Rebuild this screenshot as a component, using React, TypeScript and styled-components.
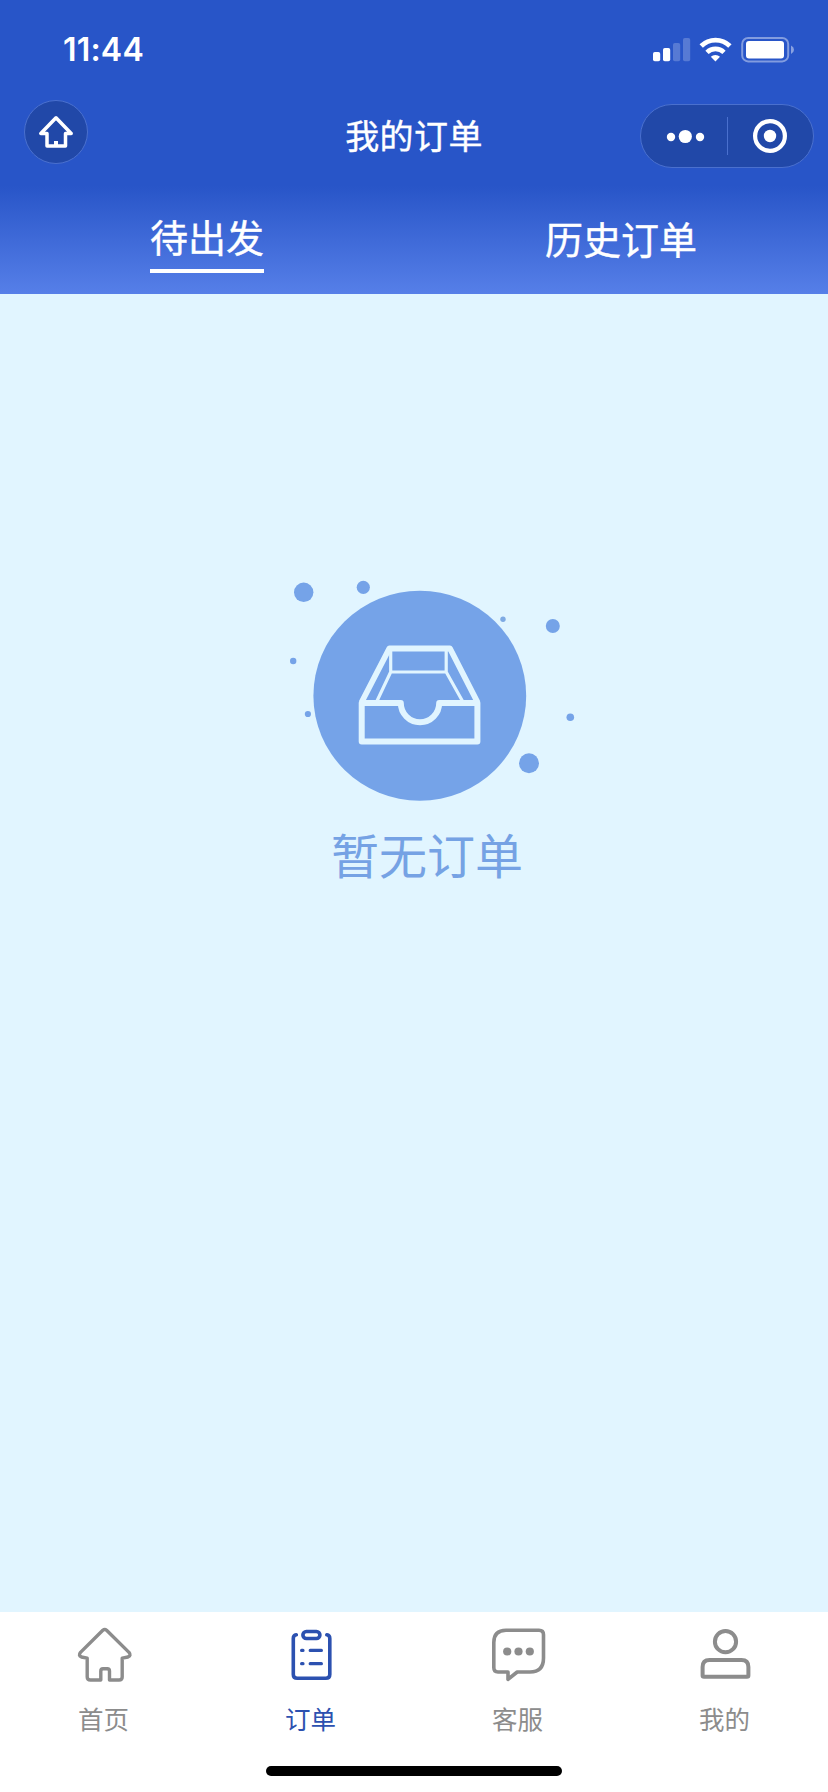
import React from 'react';
import styled, { createGlobalStyle } from 'styled-components';

const GlobalStyle = createGlobalStyle`
  * { box-sizing: border-box; }
  body {
    margin: 0;
    font-family: "Noto Sans CJK SC", "Noto Sans", sans-serif;
    -webkit-font-smoothing: antialiased;
  }
`;

const Screen = styled.div`
  display: flex;
  flex-direction: column;
  width: 828px;
  height: 1792px;
  background: #e1f5ff;
  overflow: hidden;
`;

const Header = styled.header`
  flex: none;
  height: 294px;
  display: flex;
  flex-direction: column;
  color: #fff;
  background: linear-gradient(to bottom, #2855c8 0, #2855c8 186px, #567fe8 294px);
`;

const StatusBar = styled.div`
  height: 100px;
  display: flex;
  justify-content: space-between;
  align-items: flex-start;
  padding: 37px 34px 0 63px;
`;

const Time = styled.span`
  font: 600 32px/26px Inter, sans-serif;
  letter-spacing: 0.2px;
`;

const NavBar = styled.div`
  height: 72px;
  display: grid;
  grid-template-columns: 174px 1fr 174px;
  align-items: start;
  padding: 0 14px;
`;

const HomeButton = styled.button`
  width: 64px;
  height: 64px;
  margin-left: 10px;
  padding: 0;
  border: 1px solid #4a70ce;
  border-radius: 50%;
  background: #2148a8;
  display: grid;
  place-items: center;
`;

const Title = styled.h1`
  margin: 10px 0 0;
  text-align: center;
  font-size: 34px;
  line-height: 50px;
  font-weight: 400;
  letter-spacing: 0.4px;
  -webkit-text-stroke: 0.4px currentColor;
`;

const Capsule = styled.div`
  width: 174px;
  height: 64px;
  margin-top: 4px;
  border: 1px solid #4a70ce;
  border-radius: 32px;
  background: #2148a8;
  display: grid;
  place-items: center;
`;

const Tabs = styled.nav`
  flex: 1;
  display: grid;
  grid-template-columns: 1fr 1fr;
  justify-items: center;
  align-items: start;
`;

const Tab = styled.div<{ $active?: boolean }>`
  margin-top: ${(p) => (p.$active ? 36 : 38)}px;
  height: 65px;
  font-size: 38px;
  line-height: 56px;
  font-weight: 400;
  -webkit-text-stroke: 0.4px currentColor;
  border-bottom: 4px solid ${(p) => (p.$active ? '#fff' : 'transparent')};
`;

const Content = styled.main`
  flex: 1;
  display: flex;
  flex-direction: column;
  align-items: center;
  padding-top: 276px;
`;

const EmptyText = styled.p`
  margin: 8px 0 0 26px;
  font-size: 48px;
  line-height: 70px;
  font-weight: 400;
  color: #75a2e4;
`;

const TabBar = styled.footer`
  flex: none;
  height: 180px;
  background: #fff;
  display: flex;
  flex-direction: column;
  align-items: center;
`;

const TabBarItems = styled.div`
  width: 100%;
  height: 154px;
  display: grid;
  grid-template-columns: repeat(4, 1fr);
`;

const TabBarItem = styled.div<{ $active?: boolean }>`
  display: flex;
  flex-direction: column;
  align-items: center;
  padding-top: 12px;
  color: ${(p) => (p.$active ? '#2c51b0' : '#8c8c8c')};
`;

const TabBarLabel = styled.span`
  margin-top: 15px;
  font-size: 25.5px;
  line-height: 38px;
`;

const HomeIndicator = styled.div`
  width: 296px;
  height: 10px;
  border-radius: 5px;
  background: #000;
`;

const StatusIcons = () => (
  <svg width="141" height="26" viewBox="0 0 141 26" fill="#fff">
    <rect x="0" y="15" width="7.2" height="9.2" rx="1.8" />
    <rect x="10" y="11" width="7.2" height="13.2" rx="1.8" />
    <rect x="20" y="6" width="7.2" height="18.2" rx="1.8" opacity=".22" />
    <rect x="30" y="1" width="7.2" height="23.2" rx="1.8" opacity=".22" />
    <g fill="none" stroke="#fff">
      <path d="M48.2 9 A20.4 20.4 0 0 1 76.9 9" strokeWidth="4.8" />
      <path d="M54 15.4 A12 12 0 0 1 71 15.4" strokeWidth="4.6" />
    </g>
    <path d="M57.8 19.8 A6.8 6.8 0 0 1 67 19.8 L62.4 24.4Z" />
    <rect x="89.2" y="1" width="46" height="23.4" rx="6" fill="none" stroke="#fff" strokeOpacity=".42" strokeWidth="2" />
    <rect x="93" y="4" width="38" height="17.4" rx="3" />
    <path d="M138 8.5 Q141 10 141 12.8 Q141 15.6 138 17Z" opacity=".45" />
  </svg>
);

const NavHomeIcon = () => (
  <svg width="62" height="62" viewBox="1 1 62 62" fill="none" stroke="#fff" strokeWidth="3.5" strokeLinejoin="round" strokeLinecap="round">
    <path d="M32 17.8 L16.8 33.5 H23 V46 H41.5 V33.5 H47.2Z" />
    <path d="M32 41 V46" strokeLinecap="butt" strokeWidth="4" />
  </svg>
);

const CapsuleIcons = () => (
  <svg width="172" height="62" viewBox="1 1 172 62" fill="#fff">
    <circle cx="31" cy="33" r="4.2" />
    <circle cx="45.3" cy="32.5" r="6.6" />
    <circle cx="60" cy="33" r="4.2" />
    <path d="M87.5 13 V51" stroke="#4a70ce" strokeWidth="1" />
    <circle cx="130" cy="32" r="14.9" fill="none" stroke="#fff" strokeWidth="4.2" />
    <circle cx="130" cy="32" r="6.2" />
  </svg>
);

const EmptyIllustration = () => (
  <svg width="300" height="240" viewBox="264 570 300 240" fill="#75a3e8">
    <ellipse cx="419.8" cy="695.7" rx="106.4" ry="105" />
    <circle cx="303.7" cy="592.3" r="9.7" />
    <circle cx="363.3" cy="587.3" r="6.6" />
    <circle cx="503" cy="619.2" fill="#7eaae3" r="2.7" />
    <circle cx="552.8" cy="626" r="7" />
    <circle cx="293.2" cy="661" r="3.2" />
    <circle cx="307.9" cy="714" r="3.1" />
    <circle cx="570.3" cy="717.2" r="3.8" />
    <circle cx="529" cy="763.3" r="10" />
    <g fill="none" stroke="#e1f5ff" strokeLinejoin="round">
      <path d="M361.7 703 H400.8 A19.2 19.2 0 0 0 439.2 703 H477.4 V741.5 H361.7Z" strokeWidth="6" />
      <path d="M361.7 702 L389.3 648.5 H450 L477.4 702" strokeWidth="5.8" />
      <path d="M390.7 649 V672 L376.5 702 M446.2 649 V672 L463 702 M390.7 672 H447" strokeWidth="3.2" />
    </g>
  </svg>
);

const EmptyArt = styled.div`
  width: 300px;
  height: 240px;
  svg { display: block; overflow: visible; }
`;

const iconProps = {
  width: 60,
  height: 60,
  viewBox: '0 0 60 60',
  fill: 'none',
  stroke: 'currentColor',
  strokeLinecap: 'round',
  strokeLinejoin: 'round',
} as const;

const HomeIcon = () => (
  <svg {...iconProps} strokeWidth="3.4">
    <path d="M28.8 6.2 Q30.7 4.6 32.6 6.2 L55 28.4 Q57.5 31.5 54 33 L48.2 34.2 V53 Q48.2 56 45 56 H35.5 V47 Q35.5 44.8 33.3 44.8 H29 Q26.8 44.8 26.8 47 V56 H16.5 Q13.2 56 13.2 53 V34.2 L7.4 33 Q4 31.5 6.5 28.4Z" />
  </svg>
);

const OrdersIcon = () => (
  <svg {...iconProps} strokeWidth="3.6">
    <path d="M15.3 10.8 Q12.3 11.3 12.3 14.5 V50.5 Q12.3 54.3 16.3 54.3 H44.8 Q48.8 54.3 48.8 50.5 V14.5 Q48.8 11.3 45.8 10.8" />
    <rect x="21.9" y="7.5" width="17" height="7" rx="3.5" />
    <path d="M20.6 26.4 H22 M29.2 26.4 H40.4 M20.6 39.7 H22 M29.2 39.7 H40.4" strokeWidth="3.2" />
  </svg>
);

const ServiceIcon = () => (
  <svg {...iconProps} strokeWidth="3.6">
    <path d="M18 6.2 H51 Q55.5 6.2 55.5 10.8 V34 Q55.5 48 42 48 H29.2 L20 55.4 V48 H10 Q5.8 48 5.8 43.6 V18.5 Q5.8 6.2 18 6.2Z" />
    <g fill="currentColor" stroke="none">
      <circle cx="19.2" cy="27.5" r="4.1" />
      <circle cx="30.5" cy="27.5" r="4.1" />
      <circle cx="41.8" cy="27.5" r="4.1" />
    </g>
  </svg>
);

const ProfileIcon = () => (
  <svg {...iconProps} strokeWidth="4">
    <circle cx="30.5" cy="17.7" r="10.6" />
    <path d="M14.5 36 H46.5 Q53.4 36 53.4 43 V51.5 Q53.4 52.8 52 52.8 H9 Q7.6 52.8 7.6 51.5 V43 Q7.6 36 14.5 36Z" />
  </svg>
);

const tabBarItems = [
  { label: '首页', Icon: HomeIcon },
  { label: '订单', Icon: OrdersIcon, active: true },
  { label: '客服', Icon: ServiceIcon },
  { label: '我的', Icon: ProfileIcon },
];

export default function App() {
  return (
    <>
      <GlobalStyle />
      <Screen>
        <Header>
          <StatusBar>
            <Time>11:44</Time>
            <StatusIcons />
          </StatusBar>
          <NavBar>
            <HomeButton aria-label="首页">
              <NavHomeIcon />
            </HomeButton>
            <Title>我的订单</Title>
            <Capsule>
              <CapsuleIcons />
            </Capsule>
          </NavBar>
          <Tabs>
            <Tab $active>待出发</Tab>
            <Tab>历史订单</Tab>
          </Tabs>
        </Header>
        <Content>
          <EmptyArt>
            <EmptyIllustration />
          </EmptyArt>
          <EmptyText>暂无订单</EmptyText>
        </Content>
        <TabBar>
          <TabBarItems>
            {tabBarItems.map(({ label, Icon, active }) => (
              <TabBarItem key={label} $active={active}>
                <Icon />
                <TabBarLabel>{label}</TabBarLabel>
              </TabBarItem>
            ))}
          </TabBarItems>
          <HomeIndicator />
        </TabBar>
      </Screen>
    </>
  );
}
